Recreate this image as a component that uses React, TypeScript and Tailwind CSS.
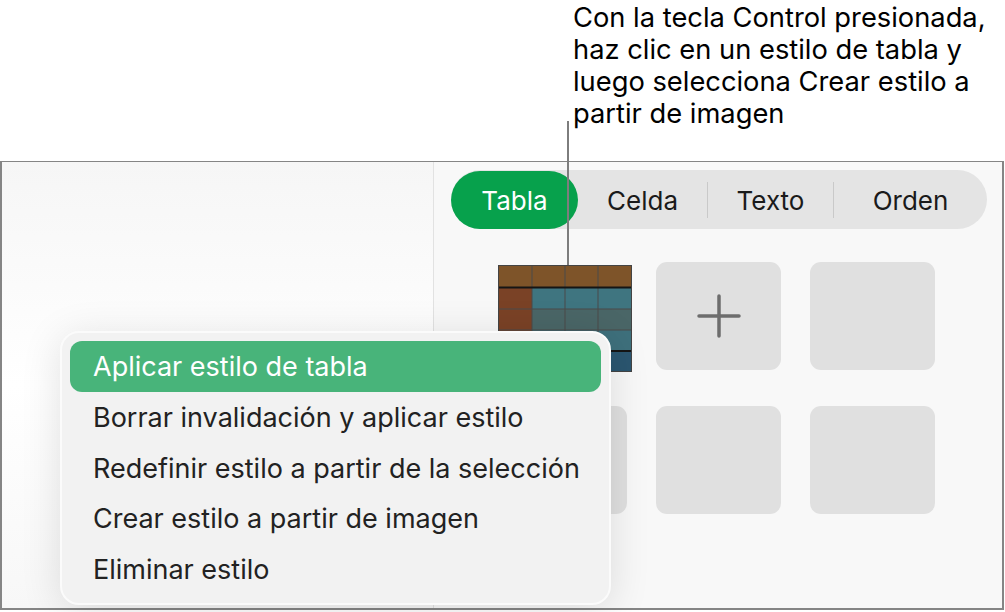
import React from "react";

const FONT = { fontFamily: "Inter, 'Noto Sans', 'Liberation Sans', sans-serif" };

const TABS = ["Tabla", "Celda", "Texto", "Orden"];

const MENU_ITEMS = [
  "Aplicar estilo de tabla",
  "Borrar invalidación y aplicar estilo",
  "Redefinir estilo a partir de la selección",
  "Crear estilo a partir de imagen",
  "Eliminar estilo",
];

function TableThumb() {
  const cols = [0, 34, 67, 100, 134];
  return (
    <svg width="134" height="107" viewBox="0 0 134 107" className="block">
      <rect x="0" y="0" width="134" height="22" fill="#7e5429" />
      <rect x="0" y="22" width="34" height="64" fill="#7a4226" />
      <rect x="34" y="22" width="100" height="22" fill="#3f7580" />
      <rect x="34" y="44" width="100" height="21" fill="#4a6667" />
      <rect x="34" y="65" width="100" height="21" fill="#3e707c" />
      <rect x="0" y="86" width="134" height="21" fill="#2b5670" />
      {cols.slice(1, 4).map((x) => (
        <line key={x} x1={x} y1="0" x2={x} y2="107" stroke="#4a4a4a" strokeWidth="1" />
      ))}
      <line x1="0" y1="44" x2="134" y2="44" stroke="#4a4a4a" strokeWidth="1" />
      <line x1="0" y1="65" x2="134" y2="65" stroke="#4a4a4a" strokeWidth="1" />
      <line x1="0" y1="22.5" x2="134" y2="22.5" stroke="#151515" strokeWidth="2" />
      <line x1="0" y1="86" x2="134" y2="86" stroke="#151515" strokeWidth="2" />
      <rect x="0.5" y="0.5" width="133" height="106" fill="none" stroke="#444" strokeWidth="1" />
    </svg>
  );
}

function Tile({ children }: { children?: React.ReactNode }) {
  return (
    <div className="w-[125px] h-[108px] rounded-[11px] bg-[#e0e0e0] flex items-center justify-center">
      {children}
    </div>
  );
}

export default function App() {
  return (
    <div className="relative w-[1005px] h-[612px] bg-white overflow-hidden text-black" style={FONT}>
      {/* callout */}
      <div className="h-[161px] pl-[573px] pt-[2px] text-[27.3px] leading-[32px] text-black whitespace-nowrap">
        Con la tecla Control presionada,
        <br />
        haz clic en un estilo de tabla y
        <br />
        luego selecciona Crear estilo a
        <br />
        partir de imagen
      </div>

      {/* window */}
      <div className="w-[1004px] h-[449px] border-2 border-t border-[#858585] flex">
        <div className="w-[432px] h-full border-r border-[#e2e2e2] bg-gradient-to-b from-[#f6f6f6] via-white to-[#f7f7f7]" />
        <div className="flex-1 h-full bg-[#f8f8f8] pl-[17px] pt-[8px]">
          <div className="w-[536px] h-[59px] rounded-full bg-[#e4e4e4] flex items-center text-[26px] pt-[1px]">
            <div className="w-[127px] h-full -mt-[1px] rounded-full bg-[#07a14c] text-white flex items-center justify-center pt-[1px]">
              {TABS[0]}
            </div>
            <div className="w-[129px] flex items-center justify-center text-[#1a1a1a]">{TABS[1]}</div>
            <div className="w-px h-[36px] bg-[#c9c9c9]" />
            <div className="w-[125px] flex items-center justify-center text-[#1a1a1a]">{TABS[2]}</div>
            <div className="w-px h-[36px] bg-[#c9c9c9]" />
            <div className="flex-1 flex items-center justify-center text-[#1a1a1a]">{TABS[3]}</div>
          </div>

          <div className="mt-[33px] ml-[51px] grid grid-cols-[125px_125px_125px] gap-x-[29px] gap-y-[36px]">
            <div className="h-[108px] flex justify-center pt-[3px]">
              <div className="w-[134px] shrink-0">
                <TableThumb />
              </div>
            </div>
            <Tile>
              <svg width="44" height="44" viewBox="0 0 44 44">
                <path d="M22 2v40M2 22h40" stroke="#6d6d6d" strokeWidth="3.5" strokeLinecap="round" />
              </svg>
            </Tile>
            <Tile />
            <Tile />
            <Tile />
            <Tile />
          </div>
        </div>
      </div>

      {/* leader line */}
      <div className="absolute left-[567px] top-[121px] w-[2px] h-[144px] bg-[#7d7d7d]" />

      {/* context menu */}
      <div className="absolute left-[60px] top-[331px] w-[551px] h-[274px] rounded-[19px] bg-[#f2f2f2] border-2 border-[#fbfbfb] shadow-[0_6px_40px_rgba(0,0,0,0.12)] px-[8px] pt-[8px]">
        {MENU_ITEMS.map((item, i) => (
          <div
            key={item}
            className={
              i === 0
                ? "h-[51px] rounded-[12px] bg-[#48b47a] text-white pl-[23px] pt-[2px] flex items-center text-[27px] whitespace-nowrap"
                : "h-[50.7px] pl-[23px] pt-[2px] flex items-center text-[27px] text-[#222] whitespace-nowrap"
            }
          >
            {item}
          </div>
        ))}
      </div>
    </div>
  );
}
